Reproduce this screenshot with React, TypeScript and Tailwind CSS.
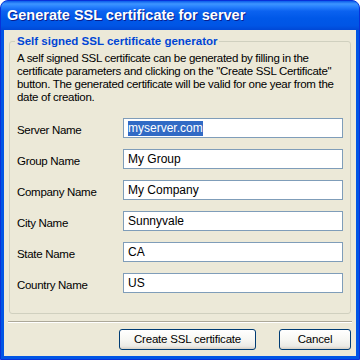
import React from "react";

const fields = [
  { label: "Server Name", value: "myserver.com", selected: true },
  { label: "Group Name", value: "My Group" },
  { label: "Company Name", value: "My Company" },
  { label: "City Name", value: "Sunnyvale" },
  { label: "State Name", value: "CA" },
  { label: "Country Name", value: "US" },
];

const XpButton = ({ children, className }: { children: React.ReactNode; className?: string }) => (
  <button
    className={`h-[21px] rounded-[3px] border border-[#003C74] bg-[linear-gradient(to_bottom,#FFFFFF_0%,#F7F7F3_50%,#ECEBE6_85%,#D6D0C5_100%)] text-[11.5px] tracking-[-0.2px] text-black ${className}`}
  >
    {children}
  </button>
);

export default function App() {
  return (
    <div className="w-[360px] h-[360px] bg-white font-['Liberation_Sans',Arial,sans-serif]">
      <div className="flex h-full flex-col rounded-t-[8px] border border-[#0831D9] bg-[#0055E5]">
        <div className="flex h-[29px] items-center rounded-t-[7px] bg-[linear-gradient(to_bottom,#0A5DEB_0%,#3D95FF_10%,#2B85FF_18%,#0B62F0_35%,#0058E8_60%,#0055E5_85%,#0048D6_100%)] pl-[6px]">
          <span className="text-[14.5px] font-bold text-white [text-shadow:1px_1px_0_#0A1E8C]">
            Generate SSL certificate for server
          </span>
        </div>
        <div className="mx-[3px] mb-[3px] flex flex-1 flex-col bg-[#ECE9D8]">
          <fieldset className="mx-[5px] mt-[5px] h-[279px] rounded-[3px] border border-[#D0D0BF] px-[7px] pt-[4px]">
            <legend className="ml-[-2px] px-[2px] text-[11.5px] font-bold leading-[13px] text-[#0046D5]">
              Self signed SSL certificate generator
            </legend>
            <p className="whitespace-nowrap text-[11.5px] leading-[13px] tracking-[-0.3px] text-black">
              A self signed SSL certificate can be generated by filling in the
              <br />
              certificate parameters and clicking on the "Create SSL Certificate"
              <br />
              button. The generated certificate will be valid for one year from the
              <br />
              date of creation.
            </p>
            <div className="mt-[14px] flex flex-col gap-[11px]">
              {fields.map((f) => (
                <div key={f.label} className="flex h-[20px] items-center">
                  <span className="w-[106px] pt-[3px] text-[11.5px] leading-[14px] tracking-[-0.3px] text-black">
                    {f.label}
                  </span>
                  <div className="flex h-[20px] w-[220px] items-center border border-[#7F9DB9] bg-white pl-[4px] text-[12px] text-black">
                    {f.selected ? (
                      <span className="bg-[#316AC5] leading-[15px] text-white">{f.value}</span>
                    ) : (
                      <span>{f.value}</span>
                    )}
                  </div>
                </div>
              ))}
            </div>
          </fieldset>
          <div className="mx-[4px] mt-[7px] border-t border-b border-t-[#ACA899] border-b-white" />
          <div className="mt-[6px] flex justify-end gap-[23px] pr-[5px]">
            <XpButton className="w-[137px]">Create SSL certificate</XpButton>
            <XpButton className="w-[72px]">Cancel</XpButton>
          </div>
        </div>
      </div>
    </div>
  );
}
